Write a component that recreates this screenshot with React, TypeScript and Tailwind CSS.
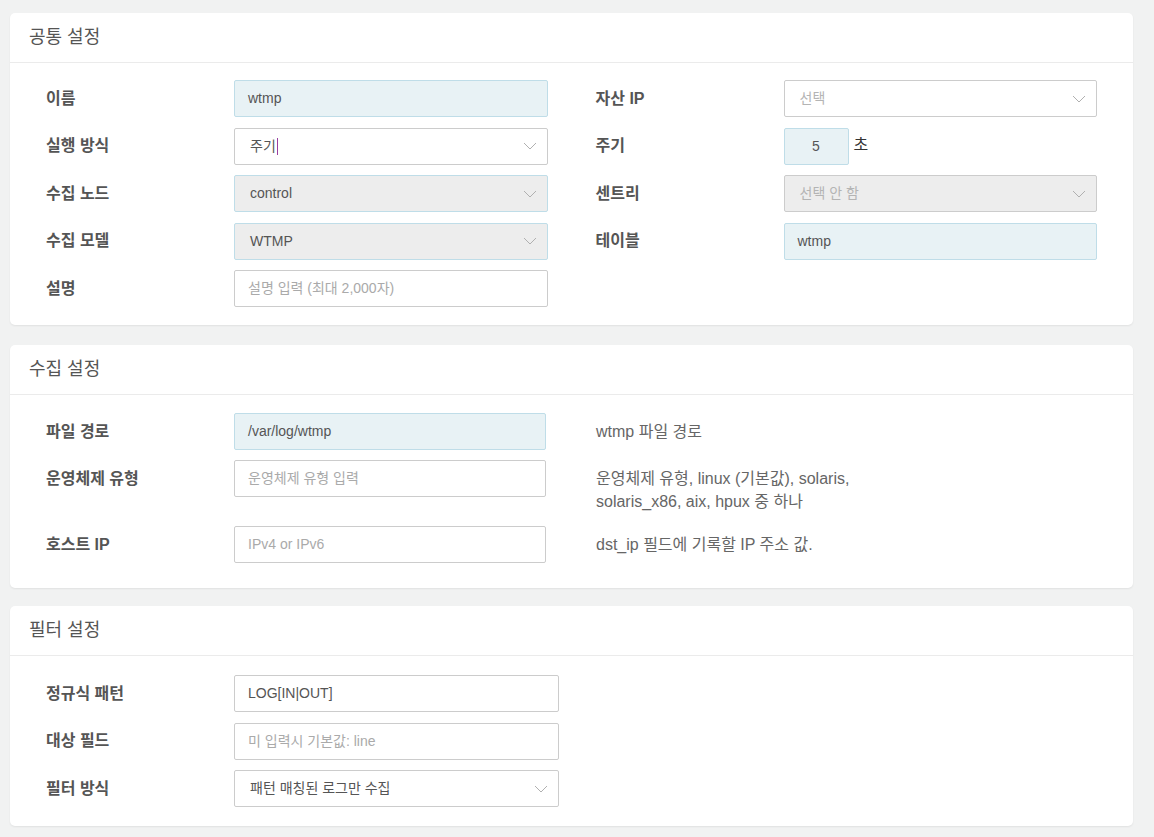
import React from 'react';

const FONT = { fontFamily: '"Liberation Sans", "Noto Sans CJK KR", sans-serif' };

type InputProps = {
  value?: string;
  placeholder?: string;
  filled?: boolean;
  className?: string;
};

const TextInput = ({ value, placeholder, filled, className = '' }: InputProps) => (
  <div
    className={`flex h-[37px] items-center rounded-[2px] border px-[13px] text-[14px] ${
      filled ? 'border-[#bfdde8] bg-[#e8f2f5]' : 'border-[#cccccc] bg-white'
    } ${className}`}
  >
    {value ? (
      <span className="text-[#555555]">{value}</span>
    ) : (
      <span className="text-[#aaaaaa]">{placeholder}</span>
    )}
  </div>
);

type SelectProps = {
  value?: string;
  placeholder?: string;
  variant?: 'plain' | 'locked' | 'disabled';
  caret?: boolean;
  className?: string;
};

const Chevron = () => (
  <svg width="14" height="8" viewBox="0 0 14 8" fill="none" className="shrink-0">
    <polyline points="1,1 7,7 13,1" stroke="#b0b0b0" strokeWidth="1" />
  </svg>
);

const Select = ({ value, placeholder, variant = 'plain', caret, className = '' }: SelectProps) => {
  const box =
    variant === 'locked'
      ? 'border-[#bfdde8] bg-[#ededed]'
      : variant === 'disabled'
        ? 'border-[#cccccc] bg-[#ededed]'
        : 'border-[#cccccc] bg-white';
  return (
    <div
      className={`flex h-[37px] items-center justify-between rounded-[2px] border pl-[15px] pr-[10px] text-[14px] ${box} ${className}`}
    >
      <span className="flex items-center">
        {value ? (
          <span className="text-[#555555]">{value}</span>
        ) : (
          <span className="text-[#b4b4b4]">{placeholder}</span>
        )}
        {caret && <span className="ml-[1px] inline-block h-[17px] w-[1px] bg-[#9b3fa0]" />}
      </span>
      <Chevron />
    </div>
  );
};

const Label = ({ children }: { children: React.ReactNode }) => (
  <div className="flex h-[37px] w-[188px] shrink-0 items-center text-[16px] font-bold text-[#555555]">
    {children}
  </div>
);

const Card = ({
  title,
  children,
  className = '',
  bodyClass = '',
}: {
  title: string;
  children: React.ReactNode;
  className?: string;
  bodyClass?: string;
}) => (
  <div className={`rounded-[5px] bg-white shadow-[0_1px_2px_rgba(0,0,0,0.07)] ${className}`}>
    <div className="flex h-[50px] items-center border-b border-[#ebebeb] px-[19px] text-[18px] text-[#555555]">
      {title}
    </div>
    <div className={`px-[36px] ${bodyClass}`}>{children}</div>
  </div>
);

const Desc = ({ children, className = '' }: { children: React.ReactNode; className?: string }) => (
  <div className={`ml-[50px] pt-[7px] text-[16px] leading-[23px] text-[#666666] ${className}`}>
    {children}
  </div>
);

export default function App() {
  return (
    <div className="min-h-screen bg-[#f1f2f2] pl-[10px] pr-[21px] pt-[13px] pb-[12px]" style={FONT}>
      {/* 공통 설정 */}
      <Card title="공통 설정" bodyClass="pt-[17px] pb-[18px]">
        <div className="grid grid-cols-2 gap-x-12">
          <div className="flex flex-col gap-[10.5px]">
            <div className="flex">
              <Label>이름</Label>
              <TextInput value="wtmp" filled className="flex-1" />
            </div>
            <div className="flex">
              <Label>실행 방식</Label>
              <Select value="주기" caret className="flex-1" />
            </div>
            <div className="flex">
              <Label>수집 노드</Label>
              <Select value="control" variant="locked" className="flex-1" />
            </div>
            <div className="flex">
              <Label>수집 모델</Label>
              <Select value="WTMP" variant="locked" className="flex-1" />
            </div>
            <div className="flex">
              <Label>설명</Label>
              <TextInput placeholder="설명 입력 (최대 2,000자)" className="flex-1" />
            </div>
          </div>
          <div className="flex flex-col gap-[10.5px]">
            <div className="flex">
              <Label>자산 IP</Label>
              <Select placeholder="선택" className="flex-1" />
            </div>
            <div className="flex items-center">
              <Label>주기</Label>
              <div className="flex h-[37px] w-[65px] items-center justify-center rounded-[2px] border border-[#bfdde8] bg-[#e8f2f5] text-[14px] text-[#555555]">
                5
              </div>
              <span className="ml-[5px] -mt-[2px] text-[16px] text-[#333333]">초</span>
            </div>
            <div className="flex">
              <Label>센트리</Label>
              <Select placeholder="선택 안 함" variant="disabled" className="flex-1" />
            </div>
            <div className="flex">
              <Label>테이블</Label>
              <TextInput value="wtmp" filled className="flex-1" />
            </div>
          </div>
        </div>
      </Card>

      {/* 수집 설정 */}
      <Card title="수집 설정" className="mt-[20px]" bodyClass="pt-[18px] pb-[25px]">
        <div className="flex flex-col gap-[10px]">
          <div className="flex items-start">
            <Label>파일 경로</Label>
            <TextInput value="/var/log/wtmp" filled className="w-[312px]" />
            <Desc>wtmp 파일 경로</Desc>
          </div>
          <div className="flex items-start">
            <Label>운영체제 유형</Label>
            <TextInput placeholder="운영체제 유형 입력" className="w-[312px]" />
            <Desc className="pb-[3px]">
              운영체제 유형, linux (기본값), solaris,
              <br />
              solaris_x86, aix, hpux 중 하나
            </Desc>
          </div>
          <div className="flex items-start">
            <Label>호스트 IP</Label>
            <TextInput placeholder="IPv4 or IPv6" className="w-[312px]" />
            <Desc>dst_ip 필드에 기록할 IP 주소 값.</Desc>
          </div>
        </div>
      </Card>

      {/* 필터 설정 */}
      <Card title="필터 설정" className="mt-[18px]" bodyClass="pt-[19px] pb-[19px]">
        <div className="flex flex-col gap-[10.5px]">
          <div className="flex">
            <Label>정규식 패턴</Label>
            <TextInput value="LOG[IN|OUT]" className="w-[325px]" />
          </div>
          <div className="flex">
            <Label>대상 필드</Label>
            <TextInput placeholder="미 입력시 기본값: line" className="w-[325px]" />
          </div>
          <div className="flex">
            <Label>필터 방식</Label>
            <Select value="패턴 매칭된 로그만 수집" className="w-[325px]" />
          </div>
        </div>
      </Card>
    </div>
  );
}
